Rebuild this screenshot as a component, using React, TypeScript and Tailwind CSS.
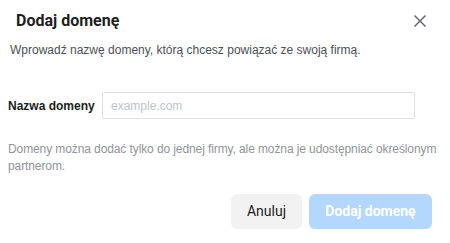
const CloseIcon = () => (
  <svg width="12" height="12" viewBox="0 0 12 12" fill="none">
    <path d="M1 1L11 11M11 1L1 11" stroke="#606770" strokeWidth="1.5" strokeLinecap="square" />
  </svg>
);

export default function App() {
  return (
    <div className="w-[450px] h-[243px] bg-white font-['Liberation_Sans',Arial,sans-serif] text-[#1c1e21] flex flex-col">
      <div className="flex items-center justify-between pl-4 pr-[22px] pt-[8px] h-[34px]">
        <h2 className="font-['Roboto',sans-serif] font-bold text-[16px] leading-none">Dodaj domenę</h2>
        <button className="w-4 h-4 flex items-center justify-center">
          <CloseIcon />
        </button>
      </div>
      <p className="px-[10px] mt-[8px] text-[12px] leading-[16px] text-[#4b4f56]">
        Wprowadź nazwę domeny, którą chcesz powiązać ze swoją firmą.
      </p>
      <div className="flex items-center pl-2 mt-[34px]">
        <label className="text-[12px] font-bold w-[94px]">Nazwa domeny</label>
        <input
          className="w-[313px] h-[27px] border border-[#dddfe2] rounded-[2px] px-2 text-[12px] placeholder:text-[#bec3c9] outline-none"
          placeholder="example.com"
        />
      </div>
      <p className="pl-2 mt-[22px] text-[12px] leading-[17px] tracking-[-0.1px] text-[#90949c]">
        Domeny można dodać tylko do jednej firmy, ale można je udostępniać określonym partnerom.
      </p>
      <div className="flex justify-end gap-[7px] pr-[18px] mt-[19px] font-['Roboto',sans-serif]">
        <button className="w-[71px] h-[35px] rounded-[6px] bg-[#f2f2f2] text-[14px] text-[#1c1e21]">Anuluj</button>
        <button className="w-[123px] h-[35px] rounded-[6px] bg-[#b3d7ff] text-[14px] text-white font-bold">Dodaj domenę</button>
      </div>
    </div>
  );
}
